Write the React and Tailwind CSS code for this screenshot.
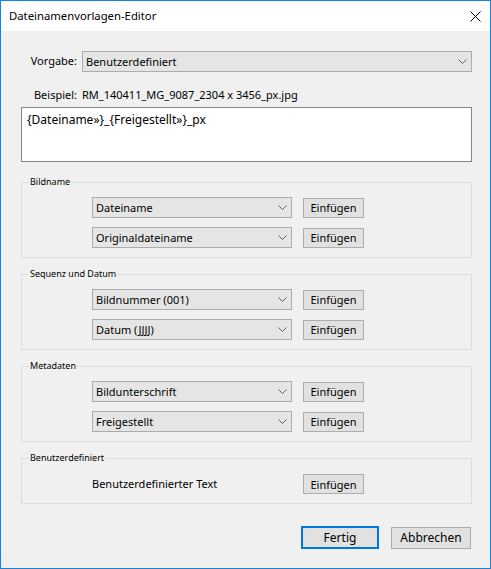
const FONT = { fontFamily: '"Noto Sans", "Open Sans", Arial, sans-serif' };

function Chevron() {
  return (
    <svg width="9" height="5" viewBox="0 0 9 5" className="shrink-0">
      <path d="M0.5 0.5 L4.5 4.5 L8.5 0.5" fill="none" stroke="#606060" strokeWidth="1" />
    </svg>
  );
}

function Select({ value, className = '' }) {
  return (
    <div className={`h-[21px] flex items-center justify-between bg-[#e5e5e5] border border-[#acacac] pl-[3px] pr-[4px] text-[11px] text-black ${className}`}>
      <span className="leading-none">{value}</span>
      <Chevron />
    </div>
  );
}

function InsertButton() {
  return (
    <button className="w-[61px] h-[20px] flex items-center justify-center bg-[#e1e1e1] border border-[#adadad] text-[11px] text-black leading-none">
      Einfügen
    </button>
  );
}

function Group({ title, children, last }) {
  return (
    <div className={`relative border border-[#dcdcdc] pl-[70px] ${last ? 'pt-[15px]' : 'pt-[14px]'} pb-[9px] flex flex-col gap-[9px]`}>
      <span className="absolute -top-[7px] left-[7px] px-[1px] bg-[#f0f0f0] text-[9px] leading-[12px] text-black">
        {title}
      </span>
      {children}
    </div>
  );
}

function Row({ value }) {
  return (
    <div className="flex items-center gap-[11px]">
      <Select value={value} className="w-[200px]" />
      <InsertButton />
    </div>
  );
}

export default function App() {
  return (
    <div className="w-[491px] h-[569px] border border-[#1883d7] bg-[#f0f0f0] flex flex-col" style={FONT}>
      {/* Title bar */}
      <div className="h-[30px] bg-white flex items-center justify-between pl-[8px] pr-[9px]">
        <span className="text-[11.3px] text-black">Dateinamenvorlagen-Editor</span>
        <svg width="11" height="11" viewBox="0 0 11 11">
          <path d="M0.5 0.5 L10.5 10.5 M10.5 0.5 L0.5 10.5" stroke="#000" strokeWidth="1" />
        </svg>
      </div>

      <div className="flex-1 flex flex-col pl-[20px] pr-[18px] pt-[20px]">
        {/* Vorgabe */}
        <div className="flex items-center gap-[5px]">
          <span className="w-[56px] text-right text-[11px] text-black">Vorgabe:</span>
          <Select value="Benutzerdefiniert" className="flex-1" />
        </div>

        {/* Beispiel */}
        <div className="flex items-center gap-[5px] mt-[15px] h-[16px]">
          <span className="w-[56px] text-right text-[11px] text-black">Beispiel:</span>
          <span className="text-[11px] text-black">RM_140411_MG_9087_2304 x 3456_px.jpg</span>
        </div>

        {/* Template field */}
        <div className="mt-[4px] h-[55px] bg-white border border-[#828790] px-[5px] pt-[2px] text-[12px] leading-[20px] text-black">
          {'{Dateiname»}_{Freigestellt»}_px'}
        </div>

        <div className="mt-[20px] flex flex-col gap-[16px]">
          <Group title="Bildname">
            <Row value="Dateiname" />
            <Row value="Originaldateiname" />
          </Group>
          <Group title="Sequenz und Datum">
            <Row value="Bildnummer (001)" />
            <Row value="Datum (JJJJ)" />
          </Group>
          <Group title="Metadaten">
            <Row value="Bildunterschrift" />
            <Row value="Freigestellt" />
          </Group>
          <Group title="Benutzerdefiniert" last>
            <div className="flex items-center gap-[11px]">
              <span className="w-[200px] text-[11px] text-black">Benutzerdefinierter Text</span>
              <InsertButton />
            </div>
          </Group>
        </div>

        {/* Dialog buttons */}
        <div className="mt-[22px] flex items-center justify-end gap-[12px] pr-[1px]">
          <button className="w-[78px] h-[23px] flex items-center justify-center bg-[#e1e1e1] border-2 border-[#0078d7] text-[12px] text-black leading-none">
            Fertig
          </button>
          <button className="w-[80px] h-[22px] flex items-center justify-center bg-[#e1e1e1] border border-[#adadad] text-[12px] text-black leading-none">
            Abbrechen
          </button>
        </div>
      </div>
    </div>
  );
}
